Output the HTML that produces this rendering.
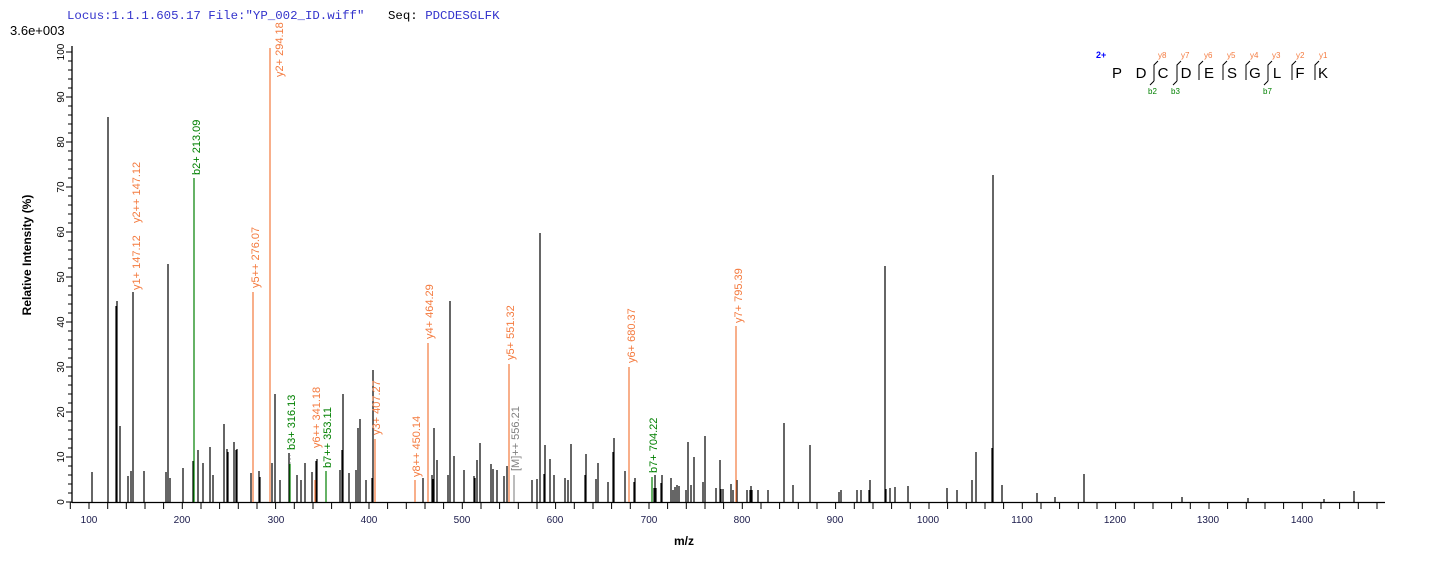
<!DOCTYPE html>
<html><head><meta charset="utf-8"><style>
html,body{margin:0;padding:0;background:#fff;}
svg{display:block;}
</style></head><body>
<svg width="1436" height="562" viewBox="0 0 1436 562" xmlns="http://www.w3.org/2000/svg" font-family="Liberation Sans, Arial, sans-serif">
<rect width="1436" height="562" fill="#fff"/>
<text x="67" y="19" font-family="Liberation Mono, monospace" font-size="12.4" fill="#3333cc">Locus:1.1.1.605.17 File:"YP_002_ID.wiff"</text>
<text x="388" y="19" font-family="Liberation Mono, monospace" font-size="12.4" fill="#000">Seq: <tspan fill="#3333cc">PDCDESGLFK</tspan></text>
<text x="10" y="35" font-size="13" fill="#000">3.6e+003</text>
<text transform="translate(31,255) rotate(-90)" font-size="12" font-weight="bold" text-anchor="middle" fill="#000">Relative   Intensity (%)</text>
<text x="684" y="545" font-size="12" font-weight="bold" text-anchor="middle" fill="#000">m/z</text>

<!-- axes -->
<g stroke="#000" stroke-width="1.3" fill="none">
<line x1="72" y1="46" x2="72" y2="503"/>
<line x1="72" y1="502.5" x2="1385" y2="502.5"/>
</g>
<g stroke="#000" stroke-width="1">
<path d="M66 52H72M68 61H72M68 70H72M68 79H72M68 88H72M66 97H72M68 106H72M68 115H72M68 124H72M68 133H72M66 142H72M68 151H72M68 160H72M68 169H72M68 178H72M66 187H72M68 196H72M68 205H72M68 214H72M68 223H72M66 232H72M68 241H72M68 250H72M68 259H72M68 268H72M66 277H72M68 286H72M68 295H72M68 304H72M68 313H72M66 322H72M68 331H72M68 340H72M68 349H72M68 358H72M66 367H72M68 376H72M68 385H72M68 394H72M68 403H72M66 412H72M68 421H72M68 430H72M68 439H72M68 448H72M66 457H72M68 466H72M68 475H72M68 484H72M68 493H72M66 502H72"/>
<path id="xt" d="M70.3 502V509M89 502V509M107.7 502V509M126.3 502V509M145 502V509M163.6 502V509M182.3 502V509M201 502V509M219.6 502V509M238.3 502V509M257 502V509M275.6 502V509M294.3 502V509M313 502V509M331.6 502V509M350.3 502V509M369 502V509M387.6 502V509M406.3 502V509M425 502V509M443.6 502V509M462.3 502V509M481 502V509M499.6 502V509M518.3 502V509M537 502V509M555.6 502V509M574.3 502V509M593 502V509M611.6 502V509M630.3 502V509M649 502V509M667.6 502V509M686.3 502V509M705 502V509M723.6 502V509M742.3 502V509M761 502V509M779.6 502V509M798.3 502V509M817 502V509M835.6 502V509M854.3 502V509M873 502V509M891.6 502V509M910.3 502V509M929 502V509M947.6 502V509M966.3 502V509M985 502V509M1003.6 502V509M1022.3 502V509M1041 502V509M1059.6 502V509M1078.3 502V509M1097 502V509M1115.6 502V509M1134.3 502V509M1153 502V509M1171.6 502V509M1190.3 502V509M1209 502V509M1227.6 502V509M1246.3 502V509M1265 502V509M1283.6 502V509M1302.3 502V509M1321 502V509M1339.6 502V509M1358.3 502V509M1377 502V509"/>
</g>
<g font-size="10" fill="#000" text-anchor="middle">
<text transform="translate(64,52) rotate(-90)">100</text>
<text transform="translate(64,97) rotate(-90)">90</text>
<text transform="translate(64,142) rotate(-90)">80</text>
<text transform="translate(64,187) rotate(-90)">70</text>
<text transform="translate(64,232) rotate(-90)">60</text>
<text transform="translate(64,277) rotate(-90)">50</text>
<text transform="translate(64,322) rotate(-90)">40</text>
<text transform="translate(64,367) rotate(-90)">30</text>
<text transform="translate(64,412) rotate(-90)">20</text>
<text transform="translate(64,457) rotate(-90)">10</text>
<text transform="translate(64,502) rotate(-90)">0</text>
</g>
<g font-size="10" fill="#1a1a4a" text-anchor="middle">
<text x="89" y="523">100</text><text x="182" y="523">200</text><text x="276" y="523">300</text><text x="369" y="523">400</text><text x="462" y="523">500</text><text x="555" y="523">600</text><text x="649" y="523">700</text><text x="742" y="523">800</text><text x="835" y="523">900</text><text x="928" y="523">1000</text><text x="1022" y="523">1100</text><text x="1115" y="523">1200</text><text x="1208" y="523">1300</text><text x="1302" y="523">1400</text>
</g>

<!-- black peaks -->
<path stroke="#000" stroke-width="1.2" fill="none" d="M92 502V472M108 502V117M116 502V306M117 502V301M120 502V426M128 502V476M131 502V471M133 502V292M144 502V471M166 502V472M168 502V264M170 502V478M183 502V468M193 502V461M198 502V450M203 502V463M210 502V447M213 502V475M224 502V424M227 502V449M228 502V452M234 502V442M236 502V450M237 502V449M251 502V473M259 502V471M260 502V477M272 502V463M275 502V394M280 502V480M289 502V453M297 502V475M301 502V480M305 502V463M312 502V472M316 502V461M317 502V459M340 502V470M342 502V450M343 502V394M349 502V473M356 502V470M358 502V428M360 502V419M366 502V480M372 502V478M373 502V370M423 502V478M432 502V475M433 502V479M434 502V428M437 502V460M448 502V475M450 502V301M454 502V456M464 502V470M474 502V476M475 502V478M477 502V460M480 502V443M491 502V464M493 502V469M497 502V470M504 502V476M507 502V466M532 502V480M537 502V479M540 502V233M544 502V474M545 502V445M550 502V459M554 502V475M565 502V478M568 502V480M571 502V444M585 502V475M586 502V454M596 502V479M598 502V463M608 502V482M613 502V452M614 502V438M625 502V471M634 502V482M635 502V478M654 502V488M655 502V475M656 502V488M661 502V483M662 502V475M671 502V478M673 502V490M675 502V487M677 502V485M679 502V486M686 502V490M688 502V442M691 502V485M694 502V457M703 502V482M705 502V436M716 502V488M720 502V460M721 502V489M723 502V489M731 502V484M733 502V490M737 502V480M747 502V490M750 502V490M751 502V486M752 502V490M758 502V490M768 502V490M784 502V423M793 502V485M810 502V445M839 502V492M841 502V490M857 502V490M861 502V490M869 502V490M870 502V480M885 502V266M886 502V489M890 502V488M895 502V487M908 502V486M947 502V488M957 502V490M972 502V480M976 502V452M992 502V448M993 502V175M1002 502V485M1037 502V493M1055 502V497M1084 502V474M1182 502V497M1248 502V498M1324 502V499M1354 502V491"/>

<!-- annotated peaks -->
<g stroke-width="1.2" fill="none">
<path stroke="#f47a3e" d="M253 502V292M270 502V48M315 502V480M375 502V439M415 502V480M428 502V343M509 502V364M629 502V367M736 502V326"/>
<path stroke="#008000" d="M194 502V178M290 502V464M326 502V471M652 502V477"/>
<path stroke="#909090" d="M514 502V475"/>
<path stroke="#aaaaaa" stroke-dasharray="2,2" d="M290 464V455"/>
</g>
<g font-size="11">
<text transform="translate(140,290) rotate(-90)" fill="#f47a3e">y1+ 147.12</text>
<text transform="translate(140,223) rotate(-90)" fill="#f47a3e">y2++ 147.12</text>
<text transform="translate(200,175) rotate(-90)" fill="#008000">b2+ 213.09</text>
<text transform="translate(259,288) rotate(-90)" fill="#f47a3e">y5++ 276.07</text>
<text transform="translate(283,77) rotate(-90)" fill="#f47a3e">y2+ 294.18</text>
<text transform="translate(295,450) rotate(-90)" fill="#008000">b3+ 316.13</text>
<text transform="translate(320,448) rotate(-90)" fill="#f47a3e">y6++ 341.18</text>
<text transform="translate(331,468) rotate(-90)" fill="#008000">b7++ 353.11</text>
<text transform="translate(380,435) rotate(-90)" fill="#f47a3e">y3+ 407.27</text>
<text transform="translate(420,477) rotate(-90)" fill="#f47a3e">y8++ 450.14</text>
<text transform="translate(433,339) rotate(-90)" fill="#f47a3e">y4+ 464.29</text>
<text transform="translate(514,360) rotate(-90)" fill="#f47a3e">y5+ 551.32</text>
<text transform="translate(519,471) rotate(-90)" fill="#808080">[M]++ 556.21</text>
<text transform="translate(635,363) rotate(-90)" fill="#f47a3e">y6+ 680.37</text>
<text transform="translate(657,473) rotate(-90)" fill="#008000">b7+ 704.22</text>
<text transform="translate(742,323) rotate(-90)" fill="#f47a3e">y7+ 795.39</text>
</g>

<!-- sequence legend -->
<text x="1096" y="58" font-size="9" font-weight="bold" fill="#0000ff">2+</text>
<g font-size="15" fill="#000" text-anchor="middle">
<text x="1117" y="78">P</text><text x="1141" y="78">D</text><text x="1163" y="78">C</text><text x="1186" y="78">D</text><text x="1209" y="78">E</text><text x="1232" y="78">S</text><text x="1255" y="78">G</text><text x="1277" y="78">L</text><text x="1300" y="78">F</text><text x="1323" y="78">K</text>
</g>
<g stroke="#000" stroke-width="1" fill="none">
<path d="M1154 81V65L1158 61M1177 81V65L1181 61M1199 80V65L1203 61M1223 80V65L1227 61M1246 80V65L1250 61M1268 81V65L1272 61M1292 80V65L1296 61M1315 80V65L1319 61"/>
<path d="M1154 81L1150 85M1177 81L1173 85M1268 81L1264 85"/>
</g>
<g font-size="8" fill="#f47a3e">
<text x="1158" y="58">y8</text><text x="1181" y="58">y7</text><text x="1204" y="58">y6</text><text x="1227" y="58">y5</text><text x="1250" y="58">y4</text><text x="1272" y="58">y3</text><text x="1296" y="58">y2</text><text x="1319" y="58">y1</text>
</g>
<g font-size="8" fill="#008000">
<text x="1148" y="94">b2</text><text x="1171" y="94">b3</text><text x="1263" y="94">b7</text>
</g>
</svg>
</body></html>
